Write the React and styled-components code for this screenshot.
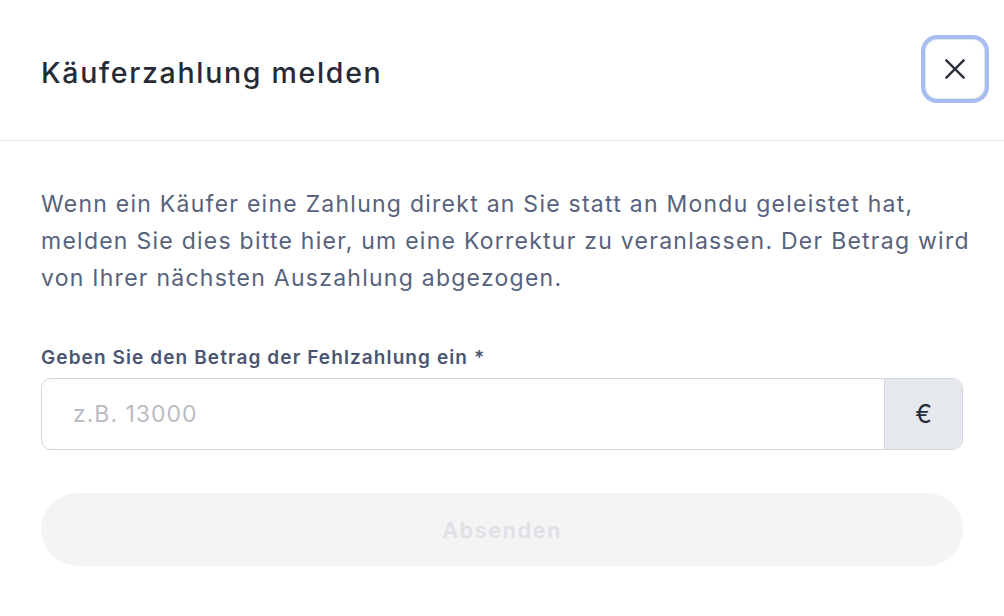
import React from "react";
import styled, { createGlobalStyle } from "styled-components";

const GlobalStyle = createGlobalStyle`
  html, body {
    margin: 0;
    padding: 0;
    background: #ffffff;
  }
  body {
    font-family: Inter, "Noto Sans", "Liberation Sans", sans-serif;
  }
`;

const Modal = styled.div`
  width: 1004px;
  height: 616px;
  background: #ffffff;
  display: flex;
  flex-direction: column;
`;

const Header = styled.div`
  height: 141px;
  box-sizing: border-box;
  padding: 0 16px 0 41px;
  display: flex;
  align-items: center;
  justify-content: space-between;
  border-bottom: 1px solid #e7e8ea;
`;

const Title = styled.h2`
  margin: 0;
  font-size: 28.5px;
  font-weight: 500;
  letter-spacing: 1.7px;
  color: #272b36;
  padding-top: 5px;
`;

const CloseButton = styled.button`
  width: 60px;
  height: 60px;
  margin-right: 3px;
  margin-bottom: 2px;
  border: 1px solid #dfe3ea;
  border-radius: 12px;
  background: #ffffff;
  box-shadow: 0 0 0 4px #a6bdf1;
  display: flex;
  align-items: center;
  justify-content: center;
  padding: 0;
  cursor: pointer;
`;

const Body = styled.div`
  padding: 45px 41px 0 41px;
  display: flex;
  flex-direction: column;
`;

const Intro = styled.p`
  margin: 0;
  font-size: 23px;
  line-height: 37px;
  letter-spacing: 1.25px;
  white-space: nowrap;
  color: #57627d;
  font-weight: 400;
`;

const Label = styled.label`
  margin-top: 49px;
  font-size: 19px;
  line-height: 24px;
  font-weight: 600;
  letter-spacing: 1.1px;
  color: #4a5572;
`;

const InputGroup = styled.div`
  margin-top: 8px;
  display: flex;
  height: 72px;
  box-sizing: border-box;
  border: 1px solid #d3d6dc;
  border-radius: 10px;
  overflow: hidden;
`;

const AmountInput = styled.input`
  flex: 1;
  border: none;
  outline: none;
  padding: 0 31px;
  font-family: inherit;
  font-size: 23px;
  letter-spacing: 1px;
  color: #272b36;
  background: transparent;
  &::placeholder {
    color: #b9bcc3;
  }
`;

const Addon = styled.div`
  width: 77px;
  border-left: 1px solid #d3d6dc;
  background: #e5e8ec;
  display: flex;
  align-items: center;
  justify-content: center;
  font-size: 25px;
  color: #272b36;
`;

const SubmitButton = styled.button`
  margin-top: 43px;
  height: 73px;
  border: none;
  border-radius: 37px;
  background: #f3f4f4;
  color: #dfe0e6;
  font-family: inherit;
  font-size: 22px;
  font-weight: 600;
  letter-spacing: 1.4px;
  cursor: not-allowed;
`;

const CloseIcon = () => (
  <svg width="26" height="26" viewBox="0 0 24 24" fill="none">
    <path
      d="M4 4L20 20M20 4L4 20"
      stroke="#2b2f3a"
      strokeWidth="2.2"
      strokeLinecap="round"
    />
  </svg>
);

export default function App() {
  return (
    <>
      <GlobalStyle />
      <Modal>
        <Header>
          <Title>Käuferzahlung melden</Title>
          <CloseButton aria-label="Schließen">
            <CloseIcon />
          </CloseButton>
        </Header>
        <Body>
          <Intro>
            Wenn ein Käufer eine Zahlung direkt an Sie statt an Mondu geleistet hat,
            <br />
            melden Sie dies bitte hier, um eine Korrektur zu veranlassen. Der Betrag wird
            <br />
            von Ihrer nächsten Auszahlung abgezogen.
          </Intro>
          <Label htmlFor="amount">Geben Sie den Betrag der Fehlzahlung ein *</Label>
          <InputGroup>
            <AmountInput id="amount" placeholder="z.B. 13000" />
            <Addon>€</Addon>
          </InputGroup>
          <SubmitButton disabled>Absenden</SubmitButton>
        </Body>
      </Modal>
    </>
  );
}
